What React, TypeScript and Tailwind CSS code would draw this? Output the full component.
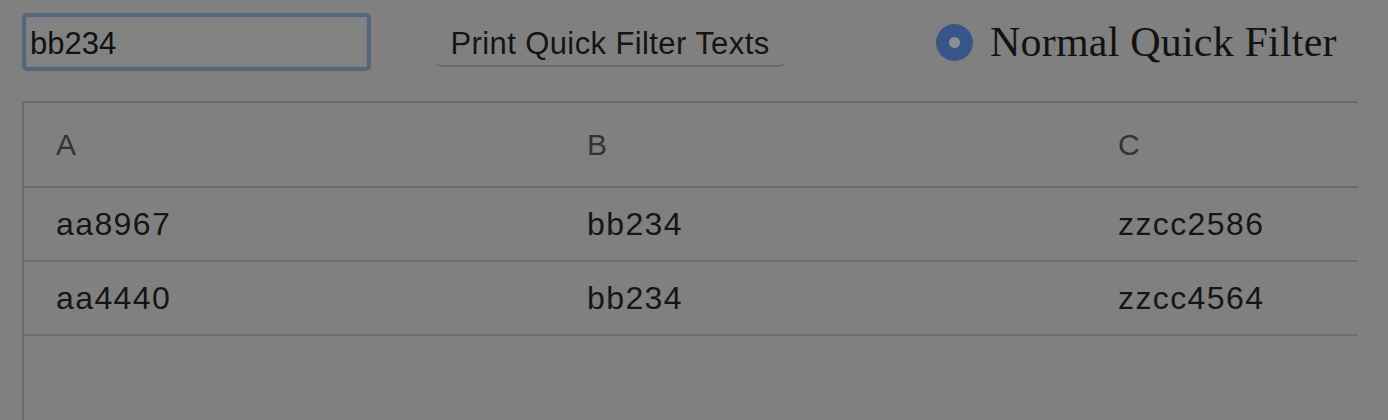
import React from 'react'

interface Row {
  a: string
  b: string
  c: string
}

const rows: Row[] = [
  { a: 'aa8967', b: 'bb234', c: 'zzcc2586' },
  { a: 'aa4440', b: 'bb234', c: 'zzcc4564' },
]

const columns = ['A', 'B', 'C']

export default function App() {
  return (
    <div className="w-[1388px] h-[420px] bg-[#808080] overflow-hidden font-['Liberation_Sans',Arial,sans-serif]">
      <div className="w-[1358px] h-full overflow-hidden pl-[22px] pt-[13px]">
        {/* toolbar */}
        <div className="flex items-center h-[58px] whitespace-nowrap">
          <input
            type="text"
            defaultValue="bb234"
            className="w-[349px] h-[58px] shrink-0 rounded-[5px] border-[4px] border-[#55667a] shadow-[inset_0_0_0_1px_#75808b] bg-[#828282] px-[4px] pt-[3px] text-[31px] text-[#111] outline-none"
          />
          <button className="ml-[64px] w-[350px] h-[48px] shrink-0 mt-[2px] rounded-b-[6px] border-b-[2px] border-[#6b6b6b] text-[31px] text-[#141414] tracking-[0.4px] pt-[2px]">
            Print Quick Filter Texts
          </button>
          <label className="ml-[151px] flex items-center shrink-0">
            <span className="w-[37px] h-[37px] rounded-full bg-[#38568a] flex items-center justify-center">
              <span className="w-[11px] h-[11px] rounded-full bg-[#8b9097]" />
            </span>
            <span className="ml-[17px] font-['Liberation_Serif','Times_New_Roman',serif] text-[42px] text-[#121212] leading-none tracking-[0.2px]">
              Normal Quick Filter
            </span>
            <span className="ml-[20px] w-[30px] h-[30px] rounded-full border-[1px] border-[#767676]" />
          </label>
        </div>

        {/* grid */}
        <div className="mt-[30px] w-[1700px] border-l-[2px] border-t-[2px] border-[#6b6b6b]">
          <div className="flex h-[85px] items-center border-b-[2px] border-[#6b6b6b]">
            {columns.map((c) => (
              <div key={c} className="w-[531px] shrink-0 pl-[32px] text-[30px] text-[#333] tracking-[0.5px]">
                {c}
              </div>
            ))}
          </div>
          {rows.map((r, i) => (
            <div key={i} className="flex h-[74px] items-center border-b-[2px] border-[#6e6e6e]">
              {[r.a, r.b, r.c].map((v, j) => (
                <div key={j} className="w-[531px] shrink-0 pl-[32px] text-[32px] text-[#151515] tracking-[1.4px]">
                  {v}
                </div>
              ))}
            </div>
          ))}
          <div className="h-[120px]" />
        </div>
      </div>
    </div>
  )
}
